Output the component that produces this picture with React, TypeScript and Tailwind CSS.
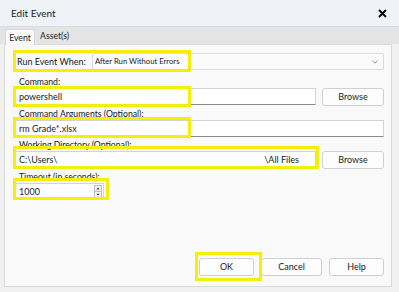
import { ChevronDown } from "lucide-react";

const FONT = { fontFamily: 'Lato, "Liberation Sans", sans-serif' };

function Mark({ className }: { className: string }) {
  return <div className={`pointer-events-none absolute border-[3px] border-[#f4ee0c] ${className}`} />;
}

function Label({ children }: { children: React.ReactNode }) {
  return <div className="h-[12px] whitespace-nowrap pl-[4px] text-[8.7px] leading-[12px] text-[#1b1b1b]">{children}</div>;
}

function Field({ children, className = "" }: { children?: React.ReactNode; className?: string }) {
  return (
    <div
      className={`flex h-[17px] items-center whitespace-nowrap border border-[#d3d3d3] border-b-[#8d8d8d] bg-white pl-[3px] text-[9px] text-[#1b1b1b] ${className}`}
    >
      {children}
    </div>
  );
}

function Btn({ children, className = "" }: { children: React.ReactNode; className?: string }) {
  return (
    <div
      className={`flex h-[18px] items-center justify-center rounded-[3px] border border-[#d0d0d0] bg-[#fdfdfd] text-[9px] text-[#1b1b1b] ${className}`}
    >
      {children}
    </div>
  );
}

export default function App() {
  return (
    <div style={FONT} className="flex h-[292px] w-[399px] flex-col overflow-hidden bg-[#f0f0f0]">
      <div className="flex h-[27px] flex-none items-center justify-between border-b border-[#d8dde5] bg-[#eff2f7] pl-[11px] pr-[12px]">
        <span className="text-[10px] text-[#1b1b1b]">Edit Event</span>
        <svg width="9" height="9" viewBox="0 0 9 9" className="text-black">
          <path d="M1 1 8 8M8 1 1 8" stroke="currentColor" strokeWidth="1.8" />
        </svg>
      </div>

      <div className="flex h-[17px] flex-none items-end bg-[#e4e4e4] pl-[5px]">
        <div className="relative z-10 -mb-px flex h-[16px] w-[30px] items-center justify-center border border-b-0 border-[#d6d6d6] bg-[#f9f9f9] text-[8.7px] text-[#1b1b1b]">
          Event
        </div>
        <div className="flex h-[16px] items-center pl-[5px] text-[8.7px] text-[#1b1b1b]">Asset(s)</div>
      </div>

      <div className="relative ml-[4px] mr-[7px] mb-[5px] flex flex-1 flex-col border border-[#dadada] bg-[#f9f9f9] pl-[10px] pr-[7px] pt-[8px] pb-[10px]">
        <div className="flex h-[17px] items-center">
          <span className="w-[77px] whitespace-nowrap pl-[2px] text-[9px] text-[#1b1b1b]">Run Event When:</span>
          <div className="flex h-[17px] flex-1 items-center justify-between rounded-[2px] border border-[#dcdcdc] bg-[#fbfbfb] pl-[2px] pr-[3px] text-[7.7px] text-[#1b1b1b]">
            <span>After Run Without Errors</span>
            <ChevronDown size={10} strokeWidth={1.5} className="text-[#555]" />
          </div>
        </div>

        <div className="mt-[6px]">
          <Label>Command:</Label>
          <div className="flex gap-[6px]">
            <Field className="flex-1">powershell</Field>
            <Btn className="w-[62px]">Browse</Btn>
          </div>
        </div>

        <div className="mt-[2px]">
          <Label>Command Arguments (Optional):</Label>
          <Field>rm Grade*.xlsx</Field>
        </div>

        <div className="mt-[2px]">
          <Label>Working Directory (Optional):</Label>
          <div className="flex gap-[6px]">
            <Field className="flex-1 justify-between pr-[16px]">
              <span>C:\Users\</span>
              <span>\All Files</span>
            </Field>
            <Btn className="w-[62px]">Browse</Btn>
          </div>
        </div>

        <div className="mt-[2px]">
          <Label>Timeout (in seconds):</Label>
          <Field className="w-[89px] justify-between pr-[1px]">
            <span>1000</span>
            <span className="flex h-[13px] w-[8px] flex-col border border-[#bdbdbd] bg-[#f3f3f3]">
              <svg viewBox="0 0 8 6" className="h-1/2 w-full border-b border-[#bdbdbd]">
                <path d="M2 4.5 4 2 6 4.5Z" fill="#333" />
              </svg>
              <svg viewBox="0 0 8 6" className="h-1/2 w-full">
                <path d="M2 1.5 4 4 6 1.5Z" fill="#333" />
              </svg>
            </span>
          </Field>
        </div>

        <div className="mt-auto flex justify-end gap-[7px]">
          <Btn className="w-[55px] border-[#5a7e9e]">OK</Btn>
          <Btn className="w-[61px]">Cancel</Btn>
          <Btn className="w-[55px]">Help</Btn>
        </div>

        <Mark className="left-[8px] top-[5px] h-[22px] w-[178px]" />
        <Mark className="left-[8px] top-[41px] h-[21px] w-[178px]" />
        <Mark className="left-[8px] top-[72px] h-[21px] w-[178px]" />
        <Mark className="left-[8px] top-[101px] h-[23px] w-[306px]" />
        <Mark className="left-[8px] top-[133px] h-[22px] w-[96px]" />
        <Mark className="left-[190px] top-[207px] h-[29px] w-[67px]" />
      </div>
    </div>
  );
}
